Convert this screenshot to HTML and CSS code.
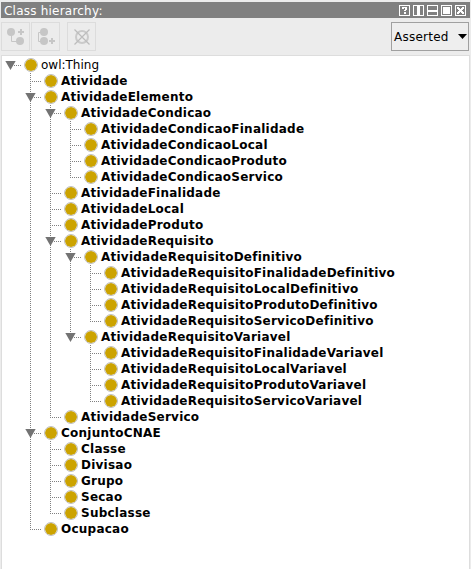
FILE: index.html
```html
<!DOCTYPE html>
<html lang="pt">
<head>
<meta charset="utf-8">
<title>Class hierarchy</title>
<link rel="stylesheet" href="styles.css">
</head>
<body>
<div class="panel">
  <header class="titlebar">
    <span class="title">Class hierarchy:</span>
    <div class="controls">
      <svg width="11" height="11" viewBox="0 0 11 11" shape-rendering="crispEdges"><path class="frame" d="M.5 .5h10v10h-10z"/><path class="fill" d="M3 2h5v1h-5zM3 3h2v1h-2zM6 3h2v2h-2zM5 5h2v1h-2zM5 7h2v2h-2z"/></svg>
      <svg width="11" height="11" viewBox="0 0 11 11" shape-rendering="crispEdges"><path class="frame" d="M.5 .5h10v10h-10z"/><path class="fill" d="M4 1h3v9h-3z"/></svg>
      <svg width="11" height="11" viewBox="0 0 11 11" shape-rendering="crispEdges"><path class="frame" d="M.5 .5h10v10h-10z"/><path class="fill" d="M1 5h9v2h-9z"/></svg>
      <svg width="11" height="11" viewBox="0 0 11 11" shape-rendering="crispEdges"><path class="frame" d="M.5 .5h10v10h-10z"/><path class="fill" d="M2 2h7v7h-7z"/></svg>
      <svg width="11" height="11" viewBox="0 0 11 11" shape-rendering="crispEdges"><path class="frame" d="M.5 .5h10v10h-10z"/><path class="fill" d="M2 2h2v1h1v1h1v-1h1v-1h2v2h-1v1h-1v1h1v1h1v2h-2v-1h-1v-1h-1v1h-1v1h-2v-2h1v-1h1v-1h-1v-1h-1z"/></svg>
    </div>
  </header>
  <div class="toolbar">
    <button class="tool"><svg width="27" height="27" viewBox="0 0 27 27"><path class="stroke" d="M9.500 9v9.500h8"/><path class="plus" d="M16 9h6M19 6v6"/><circle cx="9" cy="9" r="4"/><circle cx="18" cy="18" r="4"/></svg></button>
    <button class="tool"><svg width="27" height="27" viewBox="0 0 27 27"><path class="stroke" d="M12 9.500h-5.500v9h6"/><path class="plus" d="M17 18h6M20 15v6"/><circle cx="12" cy="9" r="4"/><circle cx="12" cy="18" r="4"/></svg></button>
    <button class="tool apart"><svg width="27" height="27" viewBox="0 0 27 27"><circle class="ring" cx="14" cy="14" r="6"/><path class="cross" d="M6.500 6.500l15 15M21.500 6.500l-15 15"/></svg></button>
    <div class="select"><span>Asserted</span><svg width="9" height="5" viewBox="0 0 9 5"><path d="M0 0h9l-4.500 5z"/></svg></div>
  </div>
  <main class="tree">
    <ul>
      <li class="root"><div class="row open"><i></i>owl:Thing</div>
        <ul>
          <li><div class="row"><i></i>Atividade</div></li>
          <li><div class="row open"><i></i>AtividadeElemento</div>
            <ul>
              <li><div class="row open"><i></i>AtividadeCondicao</div>
                <ul>
                  <li><div class="row"><i></i>AtividadeCondicaoFinalidade</div></li>
                  <li><div class="row"><i></i>AtividadeCondicaoLocal</div></li>
                  <li><div class="row"><i></i>AtividadeCondicaoProduto</div></li>
                  <li><div class="row"><i></i>AtividadeCondicaoServico</div></li>
                </ul>
              </li>
              <li><div class="row"><i></i>AtividadeFinalidade</div></li>
              <li><div class="row"><i></i>AtividadeLocal</div></li>
              <li><div class="row"><i></i>AtividadeProduto</div></li>
              <li><div class="row open"><i></i>AtividadeRequisito</div>
                <ul>
                  <li><div class="row open"><i></i>AtividadeRequisitoDefinitivo</div>
                    <ul>
                      <li><div class="row"><i></i>AtividadeRequisitoFinalidadeDefinitivo</div></li>
                      <li><div class="row"><i></i>AtividadeRequisitoLocalDefinitivo</div></li>
                      <li><div class="row"><i></i>AtividadeRequisitoProdutoDefinitivo</div></li>
                      <li><div class="row"><i></i>AtividadeRequisitoServicoDefinitivo</div></li>
                    </ul>
                  </li>
                  <li><div class="row open"><i></i>AtividadeRequisitoVariavel</div>
                    <ul>
                      <li><div class="row"><i></i>AtividadeRequisitoFinalidadeVariavel</div></li>
                      <li><div class="row"><i></i>AtividadeRequisitoLocalVariavel</div></li>
                      <li><div class="row"><i></i>AtividadeRequisitoProdutoVariavel</div></li>
                      <li><div class="row"><i></i>AtividadeRequisitoServicoVariavel</div></li>
                    </ul>
                  </li>
                </ul>
              </li>
              <li><div class="row"><i></i>AtividadeServico</div></li>
            </ul>
          </li>
          <li><div class="row open"><i></i>ConjuntoCNAE</div>
            <ul>
              <li><div class="row"><i></i>Classe</div></li>
              <li><div class="row"><i></i>Divisao</div></li>
              <li><div class="row"><i></i>Grupo</div></li>
              <li><div class="row"><i></i>Secao</div></li>
              <li><div class="row"><i></i>Subclasse</div></li>
            </ul>
          </li>
          <li><div class="row"><i></i>Ocupacao</div></li>
        </ul>
      </li>
    </ul>
  </main>
</div>
</body>
</html>
```

FILE: styles.css
```css
* { box-sizing: border-box; }
body {
  margin: 0;
  height: 569px;
  overflow: hidden;
  background: #ececec;
  font-family: "DejaVu Sans", sans-serif;
  font-size: 12px;
  color: #000;
}
.panel { display: flex; flex-direction: column; height: 569px; padding: 2px 1px 0; }
.titlebar {
  display: flex;
  align-items: flex-start;
  justify-content: space-between;
  height: 16px;
  padding: 0 4px 0 3px;
  background: #808080;
  color: #fff;
}
.title { padding-top: 1px; line-height: 16px; letter-spacing: .22px; }
.controls { display: flex; gap: 3px; padding-top: 3px; }
.controls svg { display: block; }
.frame { fill: none; stroke: #fff; }
.fill { fill: #fff; }
.toolbar { display: flex; height: 37px; padding: 4px 0 0; }
.tool {
  width: 29px;
  height: 29px;
  margin: 0 1px 0 0;
  padding: 0;
  border: 1px solid #dcdcdc;
  background: #ececec;
}
.tool svg { display: block; fill: #c6c6c6; }
.apart { margin-left: 6px; }
.stroke { fill: none; stroke: #c6c6c6; }
.plus { stroke: #c6c6c6; stroke-width: 2; }
.ring { fill: none; stroke: #cacaca; stroke-width: 2; }
.cross { stroke: #bcbcbc; stroke-width: 1.2; }
.select {
  display: flex;
  align-items: center;
  justify-content: space-between;
  width: 78px;
  height: 29px;
  margin: 0 1px 0 auto;
  padding: 0 1px 0 2px;
  border: 1px solid #a0a0a0;
  background: #eee;
  letter-spacing: .25px;
}
.tree {
  flex: 1;
  padding: 1px 0 0 1px;
  border: solid #ddd;
  border-width: 1px 1px 0;
  background: #fff;
}
ul { margin: 0; padding: 0; list-style: none; }
ul ul { margin-left: 20px; }
li { position: relative; }
li::before {
  content: "";
  position: absolute;
  left: 7px;
  top: 0;
  bottom: 0;
  width: 1px;
  background: repeating-linear-gradient(#808080 0 1px, transparent 1px 2px);
}
li:last-child::before { bottom: auto; height: 9px; }
.root::before { display: none; }
.row {
  position: relative;
  display: flex;
  align-items: center;
  height: 16px;
  font-weight: bold;
  letter-spacing: .24px;
  white-space: nowrap;
}
.root > .row { font-weight: normal; letter-spacing: 0; }
.row::before {
  content: "";
  flex: none;
  width: 12px;
  height: 1px;
  margin: 1px 0 0 7px;
  background: repeating-linear-gradient(90deg, #808080 0 1px, transparent 1px 2px);
}
.row.open::after {
  content: "";
  position: absolute;
  left: 2px;
  top: 4px;
  width: 11px;
  height: 9px;
  background: #737373;
  clip-path: polygon(3% 0, 97% 0, 50% 100%);
}
.row i {
  flex: none;
  width: 14px;
  height: 14px;
  margin: 0 3px 0 2px;
  border: 1px solid #c0c0c0;
  border-radius: 50%;
  background: #cca300;
  background-clip: padding-box;
}
```
